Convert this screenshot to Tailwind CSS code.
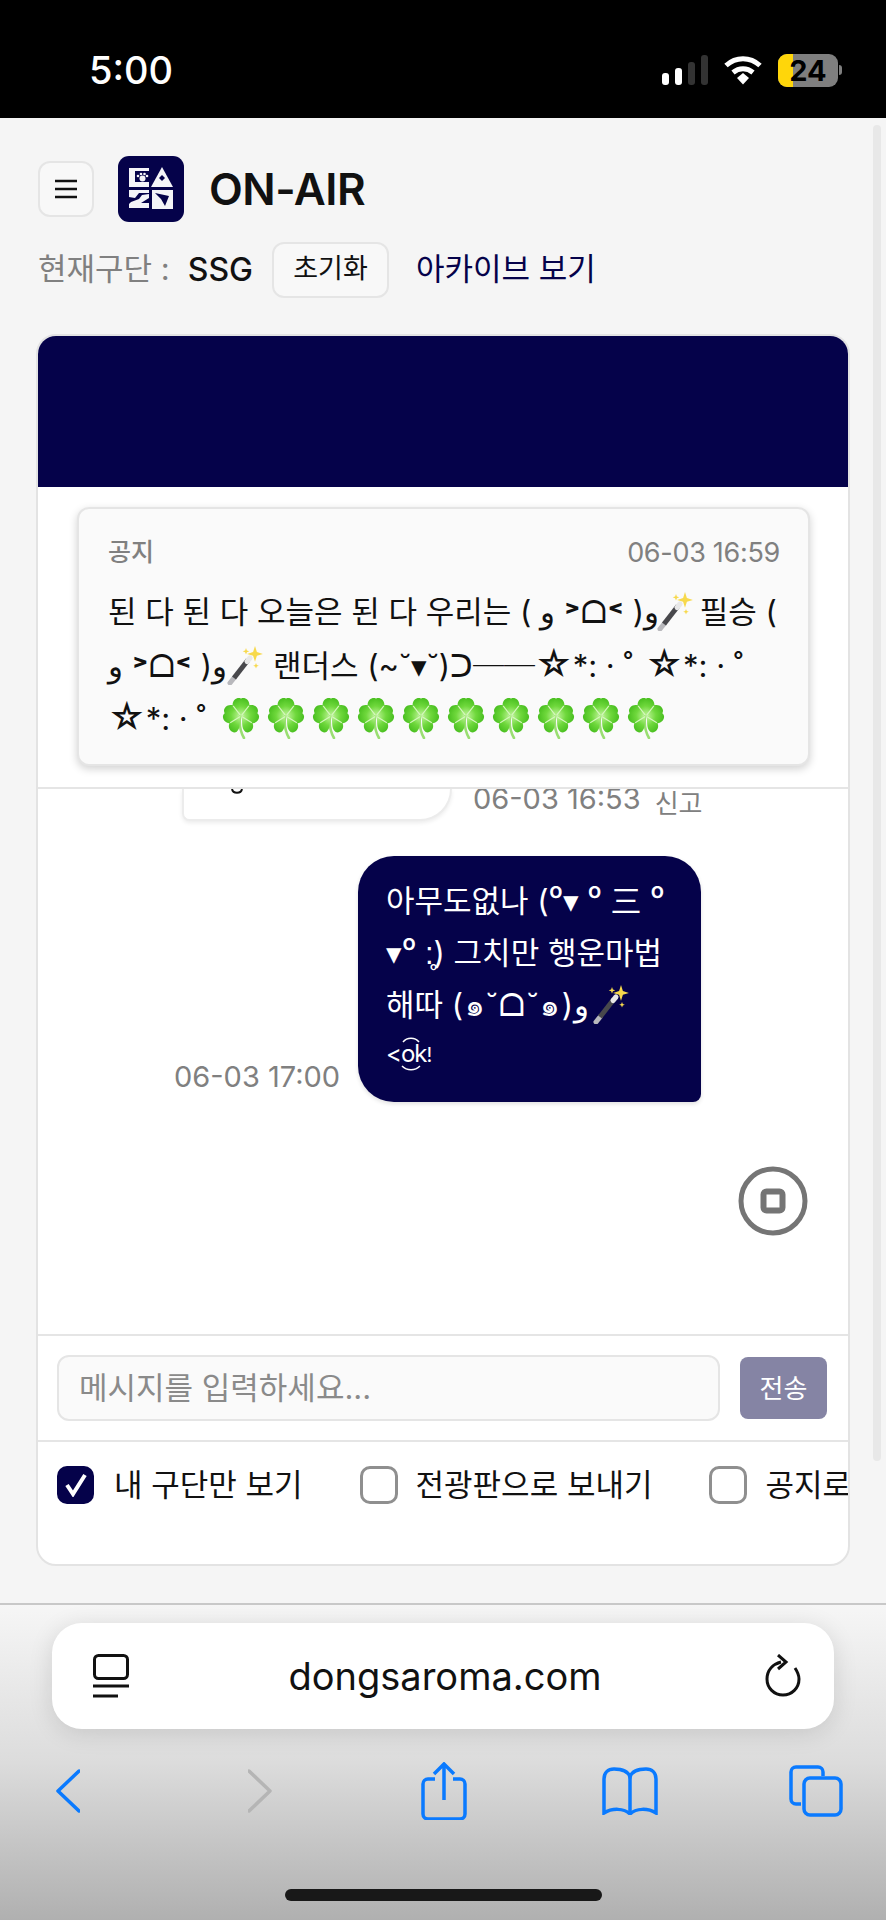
<!DOCTYPE html>
<html lang="ko">
<head>
    <meta charset="UTF-8">
    <meta name="viewport" content="width=device-width, initial-scale=1.0">
    <title>ON-AIR | dongsaroma.com</title>
    <script src="https://cdn.jsdelivr.net/npm/@tailwindcss/browser@4"></script>
</head>
<body class="bg-black">
    <svg class="absolute w-0 h-0">
        <defs>
            <radialGradient id="leaf" cx="50%" cy="85%" r="85%">
                <stop offset="0%" stop-color="#b4f08c"/>
                <stop offset="50%" stop-color="#6fd83c"/>
                <stop offset="100%" stop-color="#4cc122"/>
            </radialGradient>
            <path id="heart" d="M0 0C-3-5-12-7-13-14-13-20-4-22 0-16 4-22 13-20 13-14 12-7 3-5 0 0Z" fill="url(#leaf)"/>
        </defs>
        <symbol id="clover" viewBox="0 0 38 41">
            <path d="M18 18C17 26 18 33 22 40" stroke="#9ade72" stroke-width="2.600" fill="none" stroke-linecap="round"/>
            <g transform="translate(19 18) rotate(-38) scale(.85)"><use href="#heart"/><path d="M0-1V-15" stroke="#d6f7bf" stroke-width="1.300"/></g>
            <g transform="translate(19 18) rotate(38) scale(.85)"><use href="#heart"/><path d="M0-1V-15" stroke="#d6f7bf" stroke-width="1.300"/></g>
            <g transform="translate(19 18) rotate(-122) scale(.85)"><use href="#heart"/><path d="M0-1V-15" stroke="#d6f7bf" stroke-width="1.300"/></g>
            <g transform="translate(19 18) rotate(122) scale(.85)"><use href="#heart"/><path d="M0-1V-15" stroke="#d6f7bf" stroke-width="1.300"/></g>
        </symbol>
        <symbol id="wand" viewBox="0 0 36 40">
            <path d="M3 38L7 33" stroke="#b8b8bc" stroke-width="5" stroke-linecap="round"/>
            <path d="M7 33L21 15" stroke="#48484c" stroke-width="5"/>
            <path d="M20 16.500L23 13" stroke="#e8e8e8" stroke-width="5" stroke-linecap="round"/>
            <path d="M28 1l1.900 6 6 1.900-6 1.900-1.900 6-1.900-6-6-1.900 6-1.900Z" fill="#f7d94c"/>
            <path d="M19 3l.9 2.400 2.400.9-2.400.9-.9 2.400-.9-2.400-2.400-.9 2.400-.9Z" fill="#f7d94c"/>
            <path d="M29 18l.8 2 2 .8-2 .8-.8 2-.8-2-2-.8 2-.8Z" fill="#f7d94c"/>
        </symbol>
    </svg>

    <div class="relative w-[886px] h-[1920px] overflow-hidden flex flex-col bg-[#f5f5f5] font-['Inter','Noto_Sans_CJK_KR',sans-serif]">
        <!-- Status bar -->
        <div class="h-[118px] shrink-0 bg-black flex items-center justify-between pl-[89px] pr-[44px] pt-[22px] text-white">
            <span class="text-[38px] font-medium leading-none">5:00</span>
            <div class="flex items-center">
                <svg width="48" height="30" viewBox="0 0 48 30" class="mr-[14px]">
                    <rect x="1" y="18" width="7" height="12" rx="3" fill="#fff"/>
                    <rect x="14" y="13" width="7" height="17" rx="3" fill="#fff"/>
                    <rect x="27" y="7" width="7" height="23" rx="3" fill="#333"/>
                    <rect x="40" y="0" width="7" height="30" rx="3" fill="#333"/>
                </svg>
                <svg width="40" height="30" viewBox="0 0 40 30" class="mr-[15px]">
                    <path d="M3 10.500C13 1.500 27 1.500 37 10.500" stroke="#fff" stroke-width="5" fill="none"/>
                    <path d="M10 17.500C16 12.500 24 12.500 30 17.500" stroke="#fff" stroke-width="5" fill="none"/>
                    <path d="M14 23l6-5 6 5-6 6.500Z" fill="#fff"/>
                </svg>
                <div class="relative w-[60px] h-[33px] rounded-[9px] bg-[#7f7f7f] overflow-hidden flex items-center justify-center">
                    <div class="absolute left-0 top-0 bottom-0 w-[15px] bg-[#ffd60a]"></div>
                    <span class="relative text-black text-[29px] font-bold leading-none">24</span>
                </div>
                <div class="w-[3px] h-[10px] ml-[1px] rounded-r bg-[#7f7f7f]"></div>
            </div>
        </div>

        <!-- Page -->
        <div class="h-[1485px] shrink-0 pl-[36px] pr-[36px]">
            <div class="flex items-center h-[66px] mt-[38px] pl-[2px]">
                <button class="w-[56px] h-[56px] rounded-xl border-2 border-[#e5e5e5] bg-[#f8f8f8] flex items-center justify-center">
                    <svg width="22" height="20" viewBox="0 0 22 20"><path d="M0 2h22M0 10h22M0 18h22" stroke="#111" stroke-width="2.400"/></svg>
                </button>
                <!-- team logo -->
                <svg width="66" height="66" viewBox="0 0 66 66" class="ml-[24px]">
                    <rect width="66" height="66" rx="11" fill="#05024a"/>
                    <path d="M11 12h20v3H17v11h14v5H11Z" fill="#f4f4f8"/>
                    <circle cx="24.500" cy="22.500" r="3" fill="#f4f4f8"/>
                    <circle cx="20" cy="20" r="1.300" fill="#f4f4f8"/><circle cx="23" cy="18" r="1.300" fill="#f4f4f8"/><circle cx="26.500" cy="18" r="1.300" fill="#f4f4f8"/><circle cx="29" cy="20" r="1.300" fill="#f4f4f8"/>
                    <path d="M44 11L55 31H33Z" fill="#f4f4f8"/>
                    <path d="M44 19l3 3-3 3-3-3Z" fill="#05024a"/>
                    <path d="M11 34h20v3H21l-4 5-6-1ZM31 38v4l-8 5h8v5H11v-4l2-2 8-3 3-4Z" fill="#f4f4f8"/>
                    <rect x="34" y="34" width="21" height="19" fill="#f4f4f8"/>
                    <path d="M37 37L51 40 47 50 43 43Z" fill="#05024a"/>
                </svg>
                <h1 class="ml-[25px] text-[44px] font-semibold text-[#111] tracking-[-0.5px] leading-none">ON-AIR</h1>
            </div>

            <div class="flex items-center h-[55px] mt-[20px] pl-[2px] text-[31px] whitespace-nowrap">
                <span class="text-[#808080]">현재구단 :</span>
                <span class="ml-[18px] text-[32px] text-[#111] font-medium">SSG</span>
                <button class="ml-[19px] w-[117px] h-[56px] rounded-xl border-2 border-[#e5e5e5] bg-[#f8f8f8] text-[27px] text-[#111]">초기화</button>
                <a class="ml-[27px] text-[#05024a]">아카이브 보기</a>
            </div>

            <!-- Card -->
            <div class="mt-[37px] w-[814px] h-[1232px] border-2 border-[#e3e3e3] rounded-[20px] bg-white overflow-hidden flex flex-col">
                <div class="h-[151px] shrink-0 bg-[#05024a]"></div>

                <!-- Notice -->
                <div class="h-[302px] shrink-0 border-b-2 border-[#e5e5e5] pt-[20px] pl-[39px]">
                    <div class="w-[733px] h-[259px] rounded-xl border-2 border-[#e5e5e5] bg-[#fafafa] shadow-[0_3px_8px_rgba(0,0,0,0.18)] pl-[29px] pr-[28px] pt-[26px]">
                        <div class="flex items-center justify-between text-[#808080] h-[36px]">
                            <span class="text-[25px] font-medium">공지</span>
                            <span class="text-[27px] tracking-[-0.3px]">06-03 16:59</span>
                        </div>
                        <div class="mt-[14px] text-[31px] text-[#111] leading-[53px] whitespace-nowrap">
                            <div>된 다 된 다 오늘은 된 다 우리는 ( و <b>˃</b>ᗝ<b>˂</b> )و<svg width="36" height="40" class="inline-block align-[-8px] -ml-[2px]"><use href="#wand"/></svg> <span class="-ml-[2px]">필승 (</span></div>
                            <div>و <b>˃</b>ᗝ<b>˂</b> )و<svg width="36" height="40" class="inline-block align-[-8px]"><use href="#wand"/></svg><span class="ml-[10px]">랜더스</span> (~˘▾˘)ᑐ──<span class="text-[36px]">☆</span>*: · ˚ <span class="ml-[4px] text-[36px]">☆</span>*: · ˚</div>
                            <div class="flex items-center -mt-[1px]">
                                <span><span class="text-[36px]">☆</span>*: · ˚</span>
                                <div class="flex ml-[16px] gap-[7px]">
                                    <svg width="38" height="41"><use href="#clover"/></svg>
                                    <svg width="38" height="41"><use href="#clover"/></svg>
                                    <svg width="38" height="41"><use href="#clover"/></svg>
                                    <svg width="38" height="41"><use href="#clover"/></svg>
                                    <svg width="38" height="41"><use href="#clover"/></svg>
                                    <svg width="38" height="41"><use href="#clover"/></svg>
                                    <svg width="38" height="41"><use href="#clover"/></svg>
                                    <svg width="38" height="41"><use href="#clover"/></svg>
                                    <svg width="38" height="41"><use href="#clover"/></svg>
                                    <svg width="38" height="41"><use href="#clover"/></svg>
                                </div>
                            </div>
                        </div>
                    </div>
                </div>

                <!-- Messages -->
                <div class="relative h-[545px] shrink-0 overflow-hidden">
                    <div class="flex items-start h-[32px] pl-[144px]">
                        <div class="w-[270px] h-[32px] rounded-bl-lg rounded-br-[34px] border-2 border-t-0 border-[#ececec] bg-white shadow-[0_2px_4px_rgba(0,0,0,0.08)] pl-[46px]">
                            <svg width="14" height="6" viewBox="0 0 14 6"><path d="M2 0c1 5 9 5 10 0" fill="none" stroke="#111" stroke-width="2"/></svg>
                        </div>
                        <span class="ml-[21px] text-[29px] text-[#808080] leading-[36px] -mt-[8px]">06-03 16:53</span>
                        <span class="ml-[14px] text-[26px] text-[#808080] leading-[36px] -mt-[3px]">신고</span>
                    </div>
                    <div class="flex items-end mt-[35px] pl-[136px]">
                        <span class="w-[164px] text-[29px] text-[#808080] leading-[36px] mb-[7px] whitespace-nowrap">06-03 17:00</span>
                        <div class="ml-[20px] w-[343px] h-[246px] rounded-[36px] rounded-br-lg bg-[#05024a] shadow-[0_2px_4px_rgba(0,0,0,0.12)] text-white text-[31px] leading-[52px] whitespace-nowrap pl-[28px] pt-[19px]">
                            <div>아무도없나 (⁰▾ ⁰ 三 ⁰</div>
                            <div>▾⁰ :̥) 그치만 행운마법</div>
                            <div>해따 <span class="tracking-[1.500px]">(๑˘ᗝ˘๑)و</span><svg width="36" height="40" class="inline-block align-[-8px] ml-[4px]"><use href="#wand"/></svg></div>
                            <div class="relative w-[44px] h-[34px] text-[24px] leading-[34px] tracking-[-1px] mt-[6px]">&lt;ok<span class="text-[20px]">!</span>
                                <svg width="24" height="36" viewBox="0 0 24 36" class="absolute left-[13px] -top-[1px]">
                                    <path d="M4 6C8 1 16 1 20 6M3 30C8 35 16 35 21 30" fill="none" stroke="#fff" stroke-width="1.500"/>
                                </svg>
                            </div>
                        </div>
                    </div>
                    <!-- stop button floats over the chat -->
                    <svg width="70" height="70" viewBox="0 0 70 70" class="absolute left-[700px] top-[377px]">
                        <circle cx="35" cy="35" r="32" fill="#fff" stroke="#757575" stroke-width="5"/>
                        <rect x="25.500" y="25.500" width="19" height="19" rx="3" fill="none" stroke="#757575" stroke-width="6"/>
                    </svg>
                </div>

                <!-- Input -->
                <div class="h-[108px] shrink-0 border-t-2 border-b-2 border-[#e5e5e5] flex items-center pl-[19px] pr-[20px]">
                    <div class="w-[663px] h-[66px] rounded-xl border-2 border-[#e5e5e5] bg-[#fafafa] flex items-center pl-[20px] text-[31px] text-[#8a8a8a]">메시지를 입력하세요...</div>
                    <button class="ml-[20px] w-[87px] h-[62px] rounded-lg bg-[#8584a4] text-white text-[26px]">전송</button>
                </div>

                <!-- Options -->
                <div class="flex-1 overflow-hidden flex items-start pt-[24px] pl-[19px] text-[31px] text-[#111] whitespace-nowrap">
                    <div class="flex items-center h-[38px] shrink-0">
                        <div class="w-[37px] h-[38px] rounded-[10px] bg-[#05024a] flex items-center justify-center">
                            <svg width="24" height="24" viewBox="0 0 24 24"><path d="M3 12l6 9L21 2" stroke="#fff" stroke-width="4" fill="none"/></svg>
                        </div>
                        <span class="ml-[20px]">내 구단만 보기</span>
                    </div>
                    <div class="flex items-center h-[38px] shrink-0 ml-[57px]">
                        <div class="w-[38px] h-[38px] rounded-[10px] border-[3px] border-[#8f8f8f] bg-white"></div>
                        <span class="ml-[18px]">전광판으로 보내기</span>
                    </div>
                    <div class="flex items-center h-[38px] shrink-0 ml-[57px]">
                        <div class="w-[38px] h-[38px] rounded-[10px] border-[3px] border-[#8f8f8f] bg-white"></div>
                        <span class="ml-[18px]">공지로</span>
                    </div>
                </div>
            </div>
        </div>

        <!-- Safari bottom bar -->
        <div class="flex-1 relative border-t-2 border-[#c8c8c8] bg-linear-to-b from-[#f6f6f6] via-[#dcdcdc] to-[#b0b0b0] flex flex-col">
            <div class="mx-[52px] mt-[18px] h-[106px] rounded-[30px] bg-white shadow-[0_4px_24px_rgba(0,0,0,0.12)] flex items-center justify-between pl-[41px] pr-[33px]">
                <svg width="36" height="44" viewBox="0 0 36 44">
                    <rect x="1.500" y="1.500" width="33" height="23" rx="4" fill="none" stroke="#111" stroke-width="3"/>
                    <path d="M0 32h36M0 42h25" stroke="#111" stroke-width="3"/>
                </svg>
                <span class="mr-[4px] text-[38px] text-[#111] leading-none">dongsaroma.com</span>
                <svg width="36" height="44" viewBox="0 0 36 44">
                    <path d="M16 8C8 10 2 16 2 25c0 9 7 16 16 16s16-7 16-16c0-5-2-8-4-11" fill="none" stroke="#111" stroke-width="3"/>
                    <path d="M13 1l8 7-8 7" fill="none" stroke="#111" stroke-width="3"/>
                </svg>
            </div>

            <div class="flex items-center h-[60px] mt-[32px] pl-[56px] relative">
                <svg width="24" height="44" viewBox="0 0 24 44"><path d="M23 2L2 22l21 20" fill="none" stroke="#0a7aff" stroke-width="3.500" stroke-linecap="round" stroke-linejoin="round"/></svg>
                <svg width="24" height="44" viewBox="0 0 24 44" class="ml-[168px]"><path d="M1 2l21 20L1 42" fill="none" stroke="#b5b5b5" stroke-width="3.500" stroke-linecap="round" stroke-linejoin="round"/></svg>
                <svg width="46" height="58" viewBox="0 0 46 58" class="ml-[149px]">
                    <path d="M14 17H7a5 5 0 0 0-5 5v30a5 5 0 0 0 5 5h32a5 5 0 0 0 5-5V22a5 5 0 0 0-5-5h-7" fill="none" stroke="#0a7aff" stroke-width="3.500"/>
                    <path d="M23 38V2M13 12L23 2l10 10" fill="none" stroke="#0a7aff" stroke-width="3.500"/>
                </svg>
                <svg width="56" height="48" viewBox="0 0 56 48" class="ml-[135px]">
                    <path d="M28 10C26 4 20 2 12 2 6 2 2 6 2 12v34c8-5 20-5 26 1 6-6 18-6 26-1V12c0-6-4-10-10-10-8 0-14 2-16 8Z" fill="none" stroke="#0a7aff" stroke-width="3.500"/>
                    <path d="M28 10v37" stroke="#0a7aff" stroke-width="3.500"/>
                </svg>
                <svg width="54" height="52" viewBox="0 0 54 52" class="ml-[131px]">
                    <path d="M12 39H7a5 5 0 0 1-5-5V7a5 5 0 0 1 5-5h22a5 5 0 0 1 5 5v4" fill="none" stroke="#0a7aff" stroke-width="3.500"/>
                    <rect x="15" y="13" width="37" height="37" rx="6" fill="none" stroke="#0a7aff" stroke-width="3.500"/>
                </svg>
            </div>

            <div class="mt-auto mb-[19px] mx-auto w-[317px] h-[12px] rounded-full bg-[#181818]"></div>
        </div>

        <!-- overlay scrollbar -->
        <div class="absolute left-[873px] top-[125px] w-[8px] h-[1336px] rounded-full bg-[#e8e8e8]"></div>
    </div>
</body>
</html>
